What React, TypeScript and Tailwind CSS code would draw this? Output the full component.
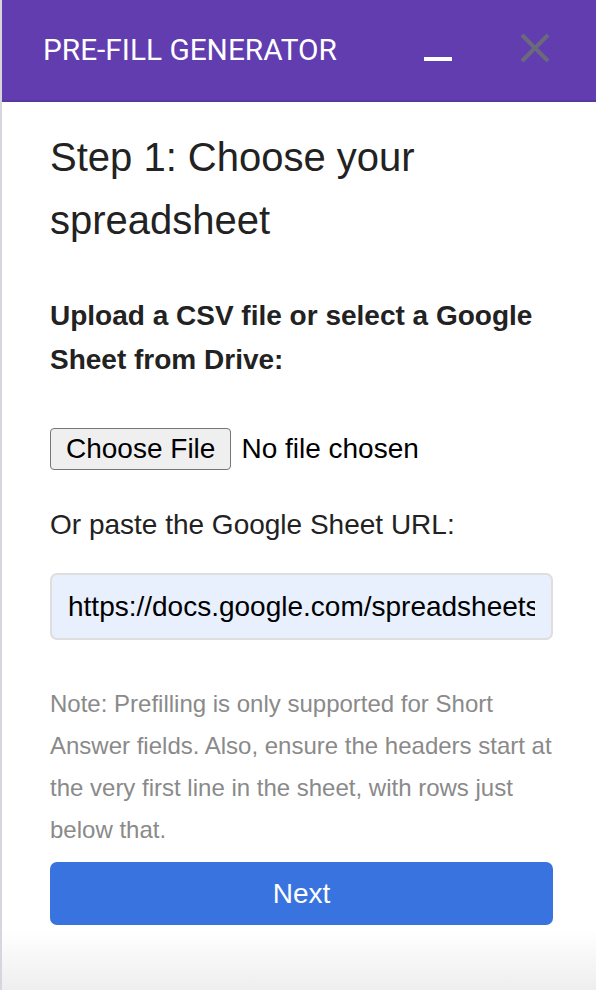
import React from 'react'

export default function App() {
  return (
    <div className="flex h-[990px] w-[596px] overflow-hidden bg-[#f4f4f6]">
      <div className="w-[2px] shrink-0 bg-[#d6d6dc]" />
      <div className="relative flex min-w-0 flex-1 flex-col bg-white" style={{ fontFamily: '"Liberation Sans", Arial, sans-serif' }}>
        {/* Header */}
        <div className="flex h-[102px] shrink-0 items-center border-b-2 border-[#5838a0] bg-[#613db0] pl-[41px] pr-[46px]">
          <span className="flex-1 text-[29.8px] text-white" style={{ fontFamily: 'Roboto, "Noto Sans", sans-serif' }}>
            PRE-FILL GENERATOR
          </span>
          <div className="mr-[68px] mt-[18px] h-[4px] w-[28px] bg-white" />
          <svg width="30" height="30" viewBox="0 0 30 30" className="-mt-[4px]">
            <path d="M2 2 L28 28 M28 2 L2 28" stroke="#6b6a7c" strokeWidth="4" />
          </svg>
        </div>

        {/* Body */}
        <div className="flex min-w-0 flex-col pl-[48px] pr-[43px] text-[#222]">
          <h1 className="pt-[24px] text-[40px] leading-[63px] text-[#222]">
            Step 1: Choose your spreadsheet
          </h1>
          <p className="mt-[42px] text-[28px] font-bold leading-[44px]">
            Upload a CSV file or select a Google Sheet from Drive:
          </p>
          <div className="mt-[46px] flex items-center">
            <button className="h-[42px] rounded-[4px] border border-[#767676] bg-[#efefef] px-[15px] text-[28px] leading-none text-black">
              Choose File
            </button>
            <span className="ml-[10px] text-[28px] text-black">No file chosen</span>
          </div>
          <p className="mt-[39px] text-[28px] leading-[32px]">Or paste the Google Sheet URL:</p>
          <input
            readOnly
            value="https://docs.google.com/spreadsheets/d/"
            className="mt-[32px] h-[67px] w-full min-w-0 rounded-[7px] border-2 border-[#dedede] bg-[#e8f0fe] px-[16px] text-[28px] text-black outline-none"
          />
          <p className="mt-[43px] text-[24px] leading-[42px] text-[#8a8a8a]">
            Note: Prefilling is only supported for Short Answer fields. Also, ensure the headers start at the very first line in the sheet, with rows just below that.
          </p>
          <button className="mt-[11px] h-[63px] w-full rounded-[7px] bg-[#3873e0] text-[28px] text-white">
            Next
          </button>
        </div>
        <div className="absolute bottom-0 left-0 right-0 h-[60px] bg-gradient-to-b from-white/0 to-[#eeeeee]" />
      </div>
    </div>
  )
}
